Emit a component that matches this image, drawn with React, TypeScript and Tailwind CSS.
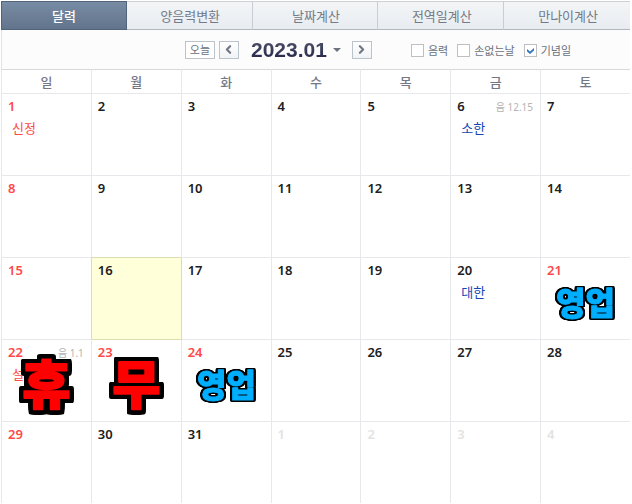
import { ChevronLeft, ChevronRight } from "lucide-react"
import clsx from "clsx"

type Day = {
    day: number
    red?: boolean
    muted?: boolean
    today?: boolean
    lunar?: string
    note?: string
    stamp?: string
}

const tabs = ["달력", "양음력변환", "날짜계산", "전역일계산", "만나이계산"]
const weekdays = ["일", "월", "화", "수", "목", "금", "토"]
const options = [
    { id: "lunar", label: "음력", checked: false },
    { id: "lucky", label: "손없는날", checked: false },
    { id: "anniversary", label: "기념일", checked: true },
]

const weeks: Day[][] = [
    [
        { day: 1, red: true, note: "신정" },
        { day: 2 }, { day: 3 }, { day: 4 }, { day: 5 },
        { day: 6, lunar: "음 12.15", note: "소한" },
        { day: 7 },
    ],
    [{ day: 8, red: true }, { day: 9 }, { day: 10 }, { day: 11 }, { day: 12 }, { day: 13 }, { day: 14 }],
    [
        { day: 15, red: true },
        { day: 16, today: true },
        { day: 17 }, { day: 18 }, { day: 19 },
        { day: 20, note: "대한" },
        { day: 21, red: true, stamp: "영업" },
    ],
    [
        { day: 22, red: true, lunar: "음 1.1", note: "설", stamp: "휴" },
        { day: 23, red: true, stamp: "무" },
        { day: 24, red: true, stamp: "영업" },
        { day: 25 }, { day: 26 }, { day: 27 }, { day: 28 },
    ],
    [
        { day: 29, red: true }, { day: 30 }, { day: 31 },
        { day: 1, muted: true }, { day: 2, muted: true }, { day: 3, muted: true }, { day: 4, muted: true },
    ],
]

// the chained drop shadows add up to a solid black outline
function Stamp({ text }: { text: string }) {
    const open = text === "영업"
    return (
        <svg
            className={clsx(
                "pointer-events-none absolute inset-0 size-full overflow-visible font-black",
                open
                    ? "text-[32px] [filter:drop-shadow(1px_0_#000)_drop-shadow(-1px_0_#000)_drop-shadow(0_1px_#000)_drop-shadow(0_-1px_#000)_drop-shadow(1px_0_#000)_drop-shadow(-1px_0_#000)]"
                    : "text-[52px] [filter:drop-shadow(3px_0_#000)_drop-shadow(-3px_0_#000)_drop-shadow(0_3px_#000)_drop-shadow(0_-3px_#000)_drop-shadow(1px_0_#000)_drop-shadow(-1px_0_#000)_drop-shadow(0_1px_#000)_drop-shadow(0_-1px_#000)]"
            )}
        >
            <text
                x="50%"
                y={open ? 57 : 64}
                textAnchor="middle"
                strokeLinejoin="round"
                className={open ? "fill-[#00aeff] stroke-[#00aeff] stroke-1" : "fill-[#ff0000] stroke-[#ff0000] stroke-2"}
            >
                {text}
            </text>
        </svg>
    )
}

function DayCell({ item }: { item: Day }) {
    return (
        <td
            className={clsx(
                "h-[82px] border-l border-t p-0 align-top",
                item.today ? "relative border-[#dcdcb4] bg-[#ffffda] shadow-[1px_1px_0_#dcdcb4]" : "border-[#e6e8eb]"
            )}
        >
            <div className="relative h-[81px] pl-[6px] pr-[7px] pt-1">
                <div className="flex h-[18px] items-center justify-between">
                    <span
                        className={clsx(
                            "text-[13px] font-semibold",
                            item.muted ? "text-[#e3e3e3]" : item.red ? "text-[#ff4848]" : "text-[#202020]"
                        )}
                    >
                        {item.day}
                    </span>
                    {item.lunar && <span className="text-[10px] text-[#b4b4b4]">{item.lunar}</span>}
                </div>
                {item.note && (
                    <p className={clsx("mt-[2px] pl-1 text-[13px] leading-5", item.red ? "text-[#ff4848]" : "text-[#1446b4]")}>
                        {item.note}
                    </p>
                )}
                {item.stamp && <Stamp text={item.stamp} />}
            </div>
        </td>
    )
}

export default function App() {
    return (
        <div className="bg-white pl-px pr-[2px] pt-px font-['Noto_Sans','Noto_Sans_CJK_KR',sans-serif]">
            <nav className="grid grid-cols-5">
                {tabs.map((tab, i) => (
                    <button
                        key={tab}
                        type="button"
                        className={clsx(
                            "h-[29px] border-t border-b text-[13px] leading-5",
                            i === 0
                                ? "border border-[#52647a] bg-linear-to-b from-[#778ba4] to-[#63758c] font-medium text-white"
                                : "border-t-[#ccd1d5] border-b-[#b0b7c0] bg-linear-to-b from-[#f3f5f7] to-[#e8ecf1] pl-[2px] text-[#727b89]",
                            i > 0 && i < 4 && "border-r border-r-[#c9ced5]"
                        )}
                    >
                        {tab}
                    </button>
                ))}
            </nav>

            <div className="flex h-[39px] items-center justify-center border-l border-[#e0e2e4] bg-[#fcfcfc] pl-[124px]">
                <button type="button" className="h-[18px] w-[30px] border border-[#bcc4cb] bg-white text-[11px] leading-4 text-[#69717e]">
                    오늘
                </button>
                <button type="button" aria-label="이전 달" className="ml-1 flex h-[18px] w-5 items-center justify-center border border-[#bcc4cb] bg-linear-to-b from-white to-[#f1f3f6] text-[#707782]">
                    <ChevronLeft size={13} strokeWidth={4} />
                </button>
                <button type="button" className="ml-3 flex items-center gap-[6px]">
                    <span className="bg-linear-to-b from-[#55566a] to-[#1f2148] bg-clip-text font-['Liberation_Sans',sans-serif] text-[21px] font-bold leading-6 text-transparent">
                        2023.01
                    </span>
                    <svg width="8" height="4" viewBox="0 0 8 4" fill="#6d737e">
                        <path d="M0 0h8L4 4z" />
                    </svg>
                </button>
                <button type="button" aria-label="다음 달" className="ml-[11px] flex h-[18px] w-5 items-center justify-center border border-[#bcc4cb] bg-linear-to-b from-white to-[#f1f3f6] text-[#707782]">
                    <ChevronRight size={13} strokeWidth={4} />
                </button>
                <div className="ml-[39px] flex gap-[9px] pt-[2px]">
                    {options.map((o) => (
                        <label key={o.id} htmlFor={o.id} className="flex items-center gap-1 text-[11px] leading-4 text-[#69717e]">
                            <span className="relative flex">
                                <input
                                    id={o.id}
                                    type="checkbox"
                                    defaultChecked={o.checked}
                                    className="peer size-[13px] appearance-none border border-[#bfbfbf] bg-white"
                                />
                                <svg viewBox="0 0 13 13" className="pointer-events-none absolute inset-0 hidden size-[13px] peer-checked:block">
                                    <path d="M3 5l3 2.6L10 4v2.6L6 10 3 7.6z" fill="#3478bd" />
                                </svg>
                            </span>
                            {o.label}
                        </label>
                    ))}
                </div>
            </div>

            <table className="w-full table-fixed border-separate border-spacing-0">
                <thead>
                    <tr>
                        {weekdays.map((d) => (
                            <th key={d} className="h-6 border-l border-t border-[#e6e8eb] border-t-[#d6d8da] p-0 text-[13px] font-medium leading-5 text-[#737887]">
                                {d}
                            </th>
                        ))}
                    </tr>
                </thead>
                <tbody>
                    {weeks.map((week, i) => (
                        <tr key={i}>
                            {week.map((item) => (
                                <DayCell key={item.day} item={item} />
                            ))}
                        </tr>
                    ))}
                </tbody>
            </table>
        </div>
    )
}
